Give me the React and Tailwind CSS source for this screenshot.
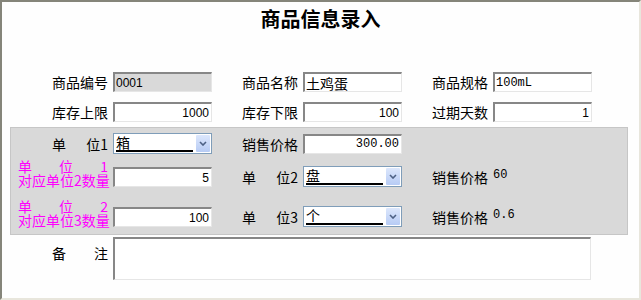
import React from 'react';

const cjk = "font-['Noto_Sans_CJK_SC','Noto_Sans',sans-serif]";

function Label({ children, w = 'w-[90px]' }) {
  return <div className={`${w} shrink-0 text-right text-[14px] leading-[14px] text-black`}>{children}</div>;
}

// 两端对齐的标签，如「单   位1」
function Spread({ left, right }) {
  return (
    <div className="w-[56px] flex justify-between text-[14px] leading-[14px] text-black">
      <span>{left}</span>
      <span>{right}</span>
    </div>
  );
}

function TextBox({ value = '', right, gray, mono, h = 'h-[20px]' }) {
  return (
    <div
      className={`w-[99px] ${h} shrink-0 flex items-center border-t-2 border-l-2 border-t-[#878787] border-l-[#878787] border-b border-r border-b-[#e6e6e6] border-r-[#e6e6e6] ${gray ? 'bg-[#d9d9d9]' : 'bg-white'} ${right ? 'justify-end pr-[2px]' : 'pl-[1px]'}`}
    >
      <span className={mono ? "font-['Liberation_Mono',monospace] text-[12px]" : "font-['Liberation_Sans','Noto_Sans_CJK_SC',sans-serif] text-[12px]"}>
        {value}
      </span>
    </div>
  );
}

function CjkBox({ value }) {
  return (
    <div className="w-[99px] h-[20px] shrink-0 flex items-center pl-[1px] border-t-2 border-l-2 border-t-[#878787] border-l-[#878787] border-b border-r border-b-[#e6e6e6] border-r-[#e6e6e6] bg-white text-[14px] leading-[14px]">
      {value}
    </div>
  );
}

function Combo({ value }) {
  return (
    <div className="w-[99px] h-[21px] shrink-0 flex border border-[#7f9db9] bg-white p-[1px]">
      <div className="flex-1 ml-[1px] mr-[3px] h-[17px] border-b-2 border-black text-[14px] leading-[14px]">{value}</div>
      <div className="w-[14px] flex items-center justify-center bg-gradient-to-b from-[#dce7fc] to-[#b7cbf4] rounded-[1px]">
        <svg width="8" height="5" viewBox="0 0 8 5">
          <path d="M1 1 L4 4 L7 1" fill="none" stroke="#4d6185" strokeWidth="1.6" />
        </svg>
      </div>
    </div>
  );
}

function PinkLabel({ n, m }) {
  return (
    <div className="w-[90px] shrink-0 text-[14px] leading-[14px] text-[#f0f]">
      <div className="flex justify-between">
        <span>单</span>
        <span>位</span>
        <span>{n}</span>
      </div>
      <div className="whitespace-nowrap">对应单位{m}数量</div>
    </div>
  );
}

function Price({ value }) {
  return (
    <div className="flex items-center h-[20px]">
      <Label w="w-[56px]">销售价格</Label>
      <span className="ml-[5px] mb-[5px] font-['Liberation_Mono',monospace] text-[12px] leading-[12px]">{value}</span>
    </div>
  );
}

export default function App() {
  return (
    <div className={`w-[641px] h-[300px] bg-[#fefefe] border-2 border-t-[#85857a] border-l-[#85857a] border-r-[#e8e6dc] border-b-[#e8e6dc] ${cjk}`}>
      <div className="mt-[7px] h-[20px] leading-[20px] text-center text-[20px] font-bold">商品信息录入</div>

      {/* 基本信息 */}
      <div className="mt-[43px] pl-[16px] flex items-center gap-[30px]">
        <div className="flex items-center gap-[5px]">
          <Label>商品编号</Label>
          <TextBox value="0001" gray />
        </div>
        <div className="flex items-center gap-[5px]">
          <Label w="w-[56px]">商品名称</Label>
          <CjkBox value="土鸡蛋" />
        </div>
        <div className="flex items-center gap-[5px]">
          <Label w="w-[56px]">商品规格</Label>
          <TextBox value="100mL" mono />
        </div>
      </div>
      <div className="mt-[10px] pl-[16px] flex items-center gap-[30px]">
        <div className="flex items-center gap-[5px]">
          <Label>库存上限</Label>
          <TextBox value="1000" right />
        </div>
        <div className="flex items-center gap-[5px]">
          <Label w="w-[56px]">库存下限</Label>
          <TextBox value="100" right />
        </div>
        <div className="flex items-center gap-[5px]">
          <Label w="w-[56px]">过期天数</Label>
          <TextBox value="1" right />
        </div>
      </div>

      {/* 单位设置 */}
      <div className="mt-[5px] ml-[8px] mr-[11px] bg-[#d9d9d9] border border-[#c6c6c6] pt-[5px] pb-[7px] pl-[7px]">
        <div className="h-[21px] flex items-center gap-[30px]">
          <div className="flex items-center gap-[5px]">
            <div className="w-[90px] flex justify-end">
              <Spread left="单" right="位1" />
            </div>
            <Combo value="箱" />
          </div>
          <div className="flex items-center gap-[5px]">
            <Label w="w-[56px]">销售价格</Label>
            <TextBox value="300.00" right mono />
          </div>
        </div>

        <div className="mt-[5px] h-[28px] flex items-end gap-[30px]">
          <div className="flex items-end gap-[5px]">
            <PinkLabel n="1" m="2" />
            <TextBox value="5" right />
          </div>
          <div className="flex items-center gap-[5px]">
            <Spread left="单" right="位2" />
            <Combo value="盘" />
          </div>
          <Price value="60" />
        </div>

        <div className="mt-[12px] h-[28px] flex items-end gap-[30px]">
          <div className="flex items-end gap-[5px]">
            <PinkLabel n="2" m="3" />
            <TextBox value="100" right />
          </div>
          <div className="flex items-center gap-[5px]">
            <Spread left="单" right="位3" />
            <Combo value="个" />
          </div>
          <Price value="0.6" />
        </div>
      </div>

      {/* 备注 */}
      <div className="mt-[2px] pl-[16px] flex items-start gap-[5px]">
        <div className="w-[90px] pt-[9px] flex justify-end">
          <Spread left="备" right="注" />
        </div>
        <div className="w-[478px] h-[43px] bg-white border-t-2 border-l-2 border-t-[#878787] border-l-[#878787] border-b border-r border-b-[#e6e6e6] border-r-[#e6e6e6]" />
      </div>
    </div>
  );
}
